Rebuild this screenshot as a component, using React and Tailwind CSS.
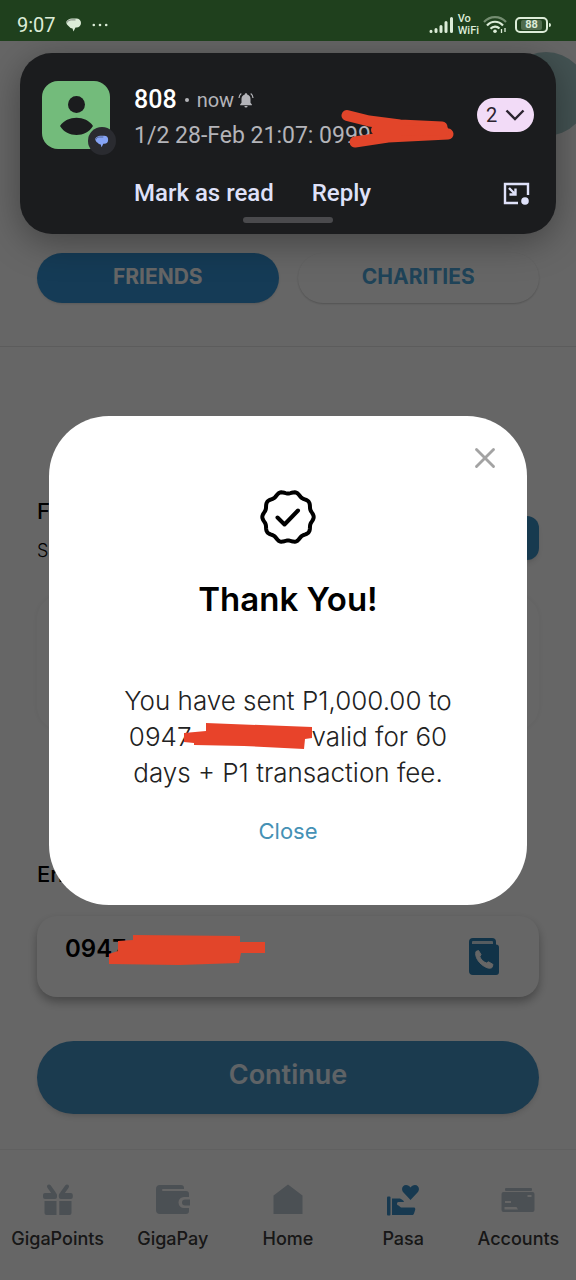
import { useState } from "react";
import { X } from "lucide-react";

// Scalloped outline of the "verified" badge
const badgePath =
  Array.from({ length: 120 }, (_, i) => {
    const a = (i / 120) * Math.PI * 2;
    const r = 24.6 + 1.1 * Math.cos(a * 10);
    const x = (28 + r * Math.cos(a)).toFixed(2);
    const y = (28 + r * Math.sin(a)).toFixed(2);
    return `${i === 0 ? "M" : "L"}${x} ${y}`;
  }).join(" ") + "Z";

const navItems = [
  { label: "GigaPoints", icon: GiftIcon },
  { label: "GigaPay", icon: WalletIcon },
  { label: "Home", icon: HomeIcon },
  { label: "Pasa", icon: PasaIcon, active: true },
  { label: "Accounts", icon: CardsIcon },
];

function GiftIcon() {
  return (
    <svg viewBox="0 0 34 34" className="w-[34px] h-[34px]" fill="currentColor">
      <path d="M8 3.500 13 10.500M26 3.500 21 10.500" stroke="currentColor" strokeWidth="4" strokeLinecap="round" />
      <rect x="2" y="10" width="14" height="6" rx="2" />
      <rect x="17.800" y="10" width="14" height="6" rx="2" />
      <path d="M3.500 18H15.500V32H5.500a2 2 0 0 1-2-2ZM18.300 18H30.500V30a2 2 0 0 1-2 2H18.300Z" />
    </svg>
  );
}

function WalletIcon() {
  return (
    <svg viewBox="0 0 34 34" className="w-[34px] h-[34px]" fill="currentColor">
      <path d="M4 2H25a3 3 0 0 1 3 3V6H7a1 1 0 0 0 0 2H30a3 3 0 0 1 3 3V14H28a5.500 5.500 0 0 0 0 11H33V28a3 3 0 0 1-3 3H4a4 4 0 0 1-4-4V6a4 4 0 0 1 4-4Z" />
      <path d="M29 16.500H34V22.500H29a3 3 0 0 1 0-6Z" />
    </svg>
  );
}

function HomeIcon() {
  return (
    <svg viewBox="0 0 34 34" className="w-[34px] h-[34px]" fill="currentColor">
      <path d="M2.500 12.500 17 1.500 31.500 12.500V31H2.500Z" />
    </svg>
  );
}

function PasaIcon() {
  return (
    <svg viewBox="0 0 34 34" className="w-[34px] h-[34px]" fill="currentColor">
      <path d="M24.500 17 17.500 9.500C14.500 6 16.500 2 20 2c2 0 3.500 1 4.500 2.500C25.500 3 27 2 29 2c3.500 0 5.500 4 2.500 7.500Z" />
      <rect x="1" y="13.500" width="3.500" height="19" rx="1" />
      <path d="M6 15.500H14c2 1 3.500 1.500 4 3.500h-5.500c-2 0-2 3.500 0 3.500l2.500 2H28c1.500 0 1.500 2 1 3l-1 3c-.5 1-1 1.500-2 1.500H6Z" />
    </svg>
  );
}

function CardsIcon() {
  return (
    <svg viewBox="0 0 34 34" className="w-[34px] h-[34px]" fill="currentColor">
      <rect x="4" y="5" width="27" height="3" rx="1" />
      <path
        fillRule="evenodd"
        d="M2.500 9H31.500a2 2 0 0 1 2 2V27a2 2 0 0 1-2 2H2.500a2 2 0 0 1-2-2V11a2 2 0 0 1 2-2ZM26.500 12V14H30.500V12ZM4 18V20H10V18ZM3.500 24V26.500H17L15.500 24Z"
      />
    </svg>
  );
}

function ChatIcon({ className }) {
  return (
    <svg viewBox="0 0 16 14" className={className} fill="currentColor">
      <path d="M6 .5h4.500a4.500 4.500 0 0 1 0 9H9.500L7.500 13.500 6.500 10.500A5 5 0 0 1 3 8.500C1 7 .2 5.500.3 3.800L1 2.800 2.500 1.500C3.500.8 4.700.5 6 .5Z" />
      <path d="M1.300 4.500C1.500 2.800 3.500 1.900 5.500 1.900h4" fill="none" stroke="#1c1d20" strokeWidth=".5" />
    </svg>
  );
}

function ContactBookIcon() {
  return (
    <svg viewBox="0 0 30 37" className="w-[30px] h-[37px]">
      <rect x="0" y="0" width="27" height="12" rx="4" fill="#2b7fb3" />
      <path d="M0 6.500H27a3 3 0 0 1 3 3V34a3 3 0 0 1-3 3H4a4 4 0 0 1-4-4Z" fill="#2b7fb3" />
      <path d="M3 6V4a1 1 0 0 1 1-1H23a1 1 0 0 1 1 1V6Z" fill="#d5e6f0" />
      <path
        d="M7 13.500 9.500 12.500 12 16.500 10.800 18.800C12 21.500 14.500 24 17.500 25L19.500 23.800 24 26.500 23 29.500C21 31 17.500 30 14 27.500 9.500 24.500 5.500 18.500 7 13.500Z"
        fill="white"
        stroke="white"
        strokeLinejoin="round"
      />
    </svg>
  );
}

function StatusBar() {
  return (
    <header className="flex items-center h-[41px] pl-[17px] pr-7 pt-2 bg-[#1f401d] text-[#dcecd8] font-[Roboto,sans-serif]">
      <span className="text-xl leading-6">9:07</span>
      <ChatIcon className="ml-[10px] w-4 h-[14px]" />
      <svg viewBox="0 0 16 4" className="ml-[10px] w-4 h-1" fill="currentColor">
        <circle cx="1.800" cy="2" r="1.300" />
        <circle cx="8" cy="2" r="1.300" />
        <circle cx="14.200" cy="2" r="1.300" />
      </svg>
      <div className="flex items-center gap-1 ml-auto">
        <svg viewBox="0 0 26 18" className="w-[26px] h-[18px]" stroke="currentColor" strokeWidth="3" strokeLinecap="round">
          <path d="M3 15.500V15.300M8 15.500V13.500M13 15.500V10.500M18 15.500V6.500M23.500 15.500V2.500" />
        </svg>
        <span className="flex flex-col text-[11px] leading-3 font-medium">
          <span>Vo</span>
          <span>WiFi</span>
        </span>
        <svg viewBox="0 0 24 18" className="w-6 h-[18px]" fill="none" stroke="currentColor" strokeWidth="2.200">
          <path d="M1 6C7-.5 17-.5 23 6" opacity=".45" />
          <path d="M4 9.500C8.500 4.500 15.500 4.500 20 9.500M7.500 12.800C10 10 14 10 16.500 12.500" />
          <circle cx="12" cy="15.300" r="1.800" fill="currentColor" stroke="none" />
          <path d="M18.500 13V17M22 12V16" strokeWidth="1.300" />
        </svg>
        <div className="relative flex items-center justify-center ml-1 w-[33px] h-4 rounded-[5px] border-2 border-[#dcecd8]">
          <span className="px-1 rounded-xs bg-[#4f6b4d] text-[11px] leading-[10px] font-bold">88</span>
          <span className="absolute -right-[5px] top-1 w-[2px] h-1 rounded-r bg-[#dcecd8]" />
        </div>
      </div>
    </header>
  );
}

function Notification() {
  return (
    <section className="absolute inset-x-5 top-3 px-[22px] pt-7 pb-[11px] rounded-[32px] bg-[#1b1c1e] shadow-[0_8px_36px_rgba(0,0,0,0.35)] font-[Roboto,sans-serif]">
      <div className="flex items-start">
        <div className="relative w-[68px] h-[68px] rounded-2xl bg-[#73bb7b]">
          <svg viewBox="0 0 68 68" className="w-full h-full" fill="#1b1c1e">
            <circle cx="34.500" cy="23.500" r="8.500" />
            <path d="M18 45C25 34 44 34 51 45 44 57 25 57 18 45Z" />
          </svg>
          <span className="absolute -right-[6px] -bottom-[6px] flex items-center justify-center w-7 h-7 rounded-full bg-[#2a2b30] text-[#86a4f5]">
            <ChatIcon className="w-[14px] h-[13px]" />
          </span>
        </div>

        <div className="relative flex-1 ml-6 pt-[3px]">
          <p className="flex items-center leading-8 text-[#b4b4b9]">
            <strong className="text-[25px] font-medium text-white">808</strong>
            <span className="mx-2 w-1 h-1 rounded-full bg-[#b4b4b9]" />
            <span className="text-xl">now</span>
            <svg viewBox="0 0 16 16" className="ml-1 w-4 h-4" fill="currentColor">
              <path d="M8 1.200c.8 0 1.200.5 1.200 1.200 2.300.7 3.300 2.500 3.300 4.600v3.700l1.400 1.700v.8H2.100v-.8l1.400-1.700V7c0-2.100 1-3.900 3.300-4.600 0-.7.4-1.200 1.200-1.200ZM6.400 14h3.200a1.600 1.600 0 0 1-3.200 0Z" />
              <path d="M1 6c0-2 .8-3.500 2.300-4.600M15 6c0-2-.8-3.500-2.300-4.600" fill="none" stroke="currentColor" strokeWidth="1.200" />
            </svg>
          </p>
          <p className="text-[23px] leading-10 text-[#b4b4b9] whitespace-nowrap">1/2 28-Feb 21:07: 0999</p>
          <svg viewBox="0 0 114 40" className="absolute left-[206px] top-[28px] w-[114px] h-10" fill="none" stroke="#e2452a" strokeLinecap="round" strokeLinejoin="round">
            <path d="M7 6.500 29 12 60 16 102 18" strokeWidth="11" />
            <path d="M15 33 48 28 108 25" strokeWidth="11" />
            <path d="M36 21 60 21 104 22" strokeWidth="10" />
          </svg>
        </div>

        <button className="flex items-center justify-center gap-2 mt-[17px] w-[57px] h-[34px] rounded-full bg-[#f2dbf7] text-xl text-[#2c2430]">
          2
          <svg viewBox="0 0 20 12" className="w-5 h-3" fill="none" stroke="currentColor" strokeWidth="2.400">
            <path d="M1.500 1.500 10 10 18.500 1.500" />
          </svg>
        </button>
      </div>

      <div className="flex items-center gap-[38px] mt-[21px] pl-[92px] text-2xl leading-8 font-medium text-[#dfe1f9]">
        <button>Mark as read</button>
        <button>Reply</button>
        <button aria-label="Open as bubble" className="ml-auto mr-1">
          <svg viewBox="0 0 27 23" className="w-[27px] h-[23px]" fill="none" stroke="currentColor" strokeWidth="2.400">
            <path d="M15 21H2V2H25V13" />
            <path d="M6 6 12 12M12.500 6.500V12.500H6.500" />
            <circle cx="22" cy="19" r="3.800" fill="currentColor" stroke="none" />
          </svg>
        </button>
      </div>
      <div className="mx-auto mt-2 w-[90px] h-[6px] rounded-full bg-[#4a4a4d]" />
    </section>
  );
}

function ThankYouDialog({ onClose }) {
  return (
    <div className="absolute inset-0 flex items-center px-[49px] bg-black/60">
      <div role="dialog" aria-labelledby="thanks" className="flex flex-col items-center w-full pt-[27px] pb-[58px] rounded-[60px] bg-white">
        <button aria-label="Close dialog" onClick={onClose} className="self-end mr-6 text-[#a3a3a3]">
          <X className="w-9 h-[34px] -my-[2px]" strokeWidth={2} />
        </button>
        <svg viewBox="0 0 56 56" className="mt-4 w-14 h-14" fill="none" stroke="black" strokeWidth="4" strokeLinecap="round" strokeLinejoin="round">
          <path d={badgePath} />
          <path d="M17.500 28.500 24.500 35.500 38 21.500" />
        </svg>
        <h2 id="thanks" className="mt-8 text-[33px] leading-[44px] font-semibold text-black">
          Thank You!
        </h2>
        <p className="mt-[62px] text-[26px] leading-9 font-light text-center text-[#222] whitespace-nowrap">
          You have sent P1,000.00 to
          <br />
          0947
          <span className="relative inline-block w-[120px] h-6 align-middle">
            <svg viewBox="0 0 130 28" className="absolute -left-[7px] -top-[5px] w-[130px] h-7" fill="#e8432a">
              <path d="M22 1 128 5V16L121 17 120 27 60 24 10 23V21L0 20V11L22 9Z" />
            </svg>
          </span>
          valid for 60
          <br />
          days + P1 transaction fee.
        </p>
        <button onClick={onClose} className="mt-6 text-[22px] leading-8 text-[#4591b5]">
          Close
        </button>
      </div>
    </div>
  );
}

export default function App() {
  const [open, setOpen] = useState(true);
  const [number, setNumber] = useState("0947");

  return (
    <div className="flex flex-col min-h-screen bg-white font-[Inter,sans-serif]">
      <StatusBar />

      <div className="relative flex flex-col flex-1 overflow-hidden">
        <div className="absolute -right-3 top-[11px] w-[84px] h-[84px] rounded-full bg-[#a9cccd]" />

        {/* Tabs */}
        <div className="flex gap-[19px] px-[37px] pt-[212px] pb-[43px] border-b border-[#e6e6e6] text-[21px] font-bold">
          <button className="flex-1 h-[50px] pb-[2px] rounded-full bg-[#3595d6] text-white shadow-sm">FRIENDS</button>
          <button className="flex-1 h-[50px] pb-[2px] rounded-full text-[#4fa9dc] shadow-[0_1px_2px_rgba(0,0,0,0.2)]">CHARITIES</button>
        </div>

        <main className="px-[37px]">
          <div className="flex justify-between pt-[148px]">
            <div>
              <h3 className="text-[22px] leading-8 font-medium">F</h3>
              <p className="pt-2 text-lg leading-8 font-light">S</p>
            </div>
            <div className="mt-[21px] w-28 h-11 rounded-xl bg-[#3b92c6] shadow-md" />
          </div>
          <div className="mt-7 h-[135px] rounded-3xl shadow-[0_0_6px_rgba(0,0,0,0.06)]" />

          <label htmlFor="number" className="block pt-32 text-[22px] leading-8 font-medium">
            En
          </label>
          <div className="relative flex items-center mt-[26px] h-[81px] pl-7 pr-10 rounded-[20px] shadow-[0_5px_10px_rgba(0,0,0,0.3)]">
            <input
              id="number"
              value={number}
              onChange={(e) => setNumber(e.target.value)}
              className="flex-1 min-w-0 pb-4 text-2xl font-semibold text-black outline-none"
            />
            <ContactBookIcon />
          </div>

          <button className="mt-11 w-full h-[73px] pb-1 rounded-full bg-[#4593c6] text-[27px] font-semibold text-[#eef8ff] shadow-md">
            Continue
          </button>
        </main>

        {/* Bottom navigation */}
        <nav className="grid grid-cols-5 mt-[35px] pt-[33px] pb-[26px] border-t border-[#f0f0f0]">
          {navItems.map(({ label, icon: Icon, active }) => (
            <a
              key={label}
              href="#"
              className={`flex flex-col items-center gap-[10px] ${active ? "text-[#3a90c8]" : "text-[#bcc7d1]"}`}
            >
              <Icon />
              <span className="text-lg leading-6 font-medium text-[#3a3a3a]">{label}</span>
            </a>
          ))}
        </nav>

        {open && <ThankYouDialog onClose={() => setOpen(false)} />}

        {/* Marker strokes over the number field */}
        <svg viewBox="0 0 156 30" className="absolute left-[109px] top-[894px] w-[156px] h-[30px]" fill="#e2452a">
          <path d="M24 0 131 1V7H156V18H132L130 28 70 30 0 29V19L9 16V6L24 5Z" />
        </svg>

        <Notification />
      </div>
    </div>
  );
}
